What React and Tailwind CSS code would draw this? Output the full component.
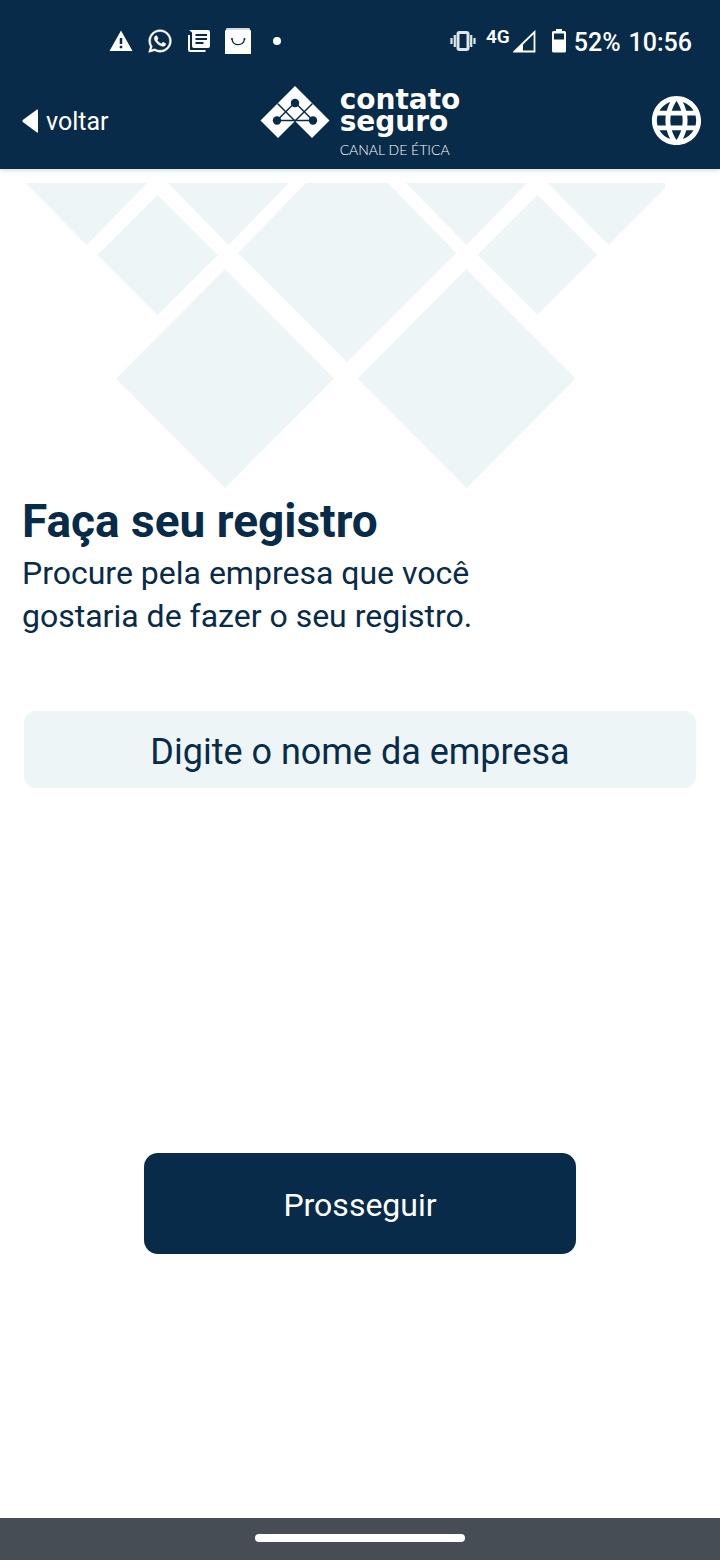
import React from "react";
import { FaWhatsapp } from "react-icons/fa";
import { MdLanguage } from "react-icons/md";

function StatusBar() {
  return (
    <div className="flex h-[82px] items-center justify-between pr-7 pl-[109px]">
      <div className="flex items-center gap-[14px]">
        <svg className="h-[22px] w-[24px]" viewBox="0 0 25 22" aria-hidden="true">
          <path d="M12.5 0 L24.5 21.5 H0.5 Z" fill="#fff" />
          <path d="M11.2 8h2.6v6h-2.6z M11.2 16h2.6v2.6h-2.6z" fill="#082b49" />
        </svg>
        <FaWhatsapp className="size-[26px] stroke-white stroke-[8px]" aria-hidden="true" />
        <svg className="h-[24px] w-[24px]" viewBox="0 0 24 24" aria-hidden="true">
          <path d="M4.5 1 H21 Q23 1 23 3 V17 Q23 19 21 19 H7 Q5 19 5 17 V4 Z" fill="#fff" />
          <path d="M2 1 H7 V5 Z" fill="#fff" />
          <path d="M1 6 H3 V21 H18.500 V23 H3 Q1 23 1 21 Z" fill="#fff" />
          <path d="M8.500 5h11.500v2h-11.500z M8.500 9h11.500v2h-11.500z M8.500 13h8v2h-8z" fill="#082b49" />
        </svg>
        <svg className="h-[26px] w-[26px]" viewBox="0 0 26 26" aria-hidden="true">
          <path d="M2 0 H24 L26 3 V26 H0 V3 Z" fill="#fff" />
          <path d="M2 0 H24 L25 2 H1 Z" fill="#d3d9de" />
          <path d="M7 11 C7.500 18.500 18.500 18.500 19.500 11" fill="none" stroke="#082b49" strokeWidth="1.300" />
          <circle cx="7" cy="11" r="1" fill="#082b49" />
          <circle cx="19.500" cy="11" r="1" fill="#082b49" />
        </svg>
        <span className="ml-2 size-2 rounded-full bg-white" />
      </div>
      <div className="flex items-center">
        <svg className="h-[20px] w-[26px]" viewBox="0 0 26 20" aria-hidden="true">
          <rect x="8" y="1.500" width="10" height="17" rx="1.500" fill="none" stroke="#dfe6ec" strokeWidth="3" />
          <path d="M4.800 4v12 M1.500 7v6 M21.200 4v12 M24.500 7v6" stroke="#dfe6ec" strokeWidth="2.200" />
        </svg>
        <span className="ml-[10px] pb-2 text-[19px] leading-5 font-semibold">4G</span>
        <svg className="ml-[3px] h-[23px] w-[23px]" viewBox="0 0 23 23" aria-hidden="true">
          <path d="M1.500 21.500 L21.500 2 V21.500 Z" fill="none" stroke="#fff" strokeWidth="1.800" />
          <path d="M1 22 L10 13 V22 Z" fill="#fff" />
        </svg>
        <svg className="ml-4 h-[24px] w-[14px]" viewBox="0 0 14 24" aria-hidden="true">
          <path d="M4 0 H10 V2 H12.500 Q14 2 14 3.500 V22 Q14 23.500 12.500 23.500 H1.500 Q0 23.500 0 22 V3.500 Q0 2 1.500 2 H4 Z" fill="#fff" />
          <rect x="2" y="4.500" width="10" height="6" fill="#082b49" />
        </svg>
        <div className="flex gap-2 pt-1 pl-2 text-[25px] leading-8 font-medium">
          <span>52%</span>
          <span>10:56</span>
        </div>
      </div>
    </div>
  );
}

function Logo() {
  return (
    <div className="flex items-start gap-[10px]">
      <svg className="h-[53px] w-[70px]" viewBox="0 0 70 53" aria-hidden="true">
        <path d="M35 0 L69.500 34.500 L52 52 L35 35 L18 52 L0.500 34.500 Z" fill="#fff" />
        <g stroke="#082b49" strokeWidth="1.500" fill="none">
          <path d="M17.500 17.500 L35 35 L52.500 17.500" />
          <path d="M17 34.500 L35 16.500 L53 34.500 Z" />
        </g>
        <g fill="#082b49">
          <circle cx="35" cy="17" r="4.200" />
          <circle cx="17" cy="34.500" r="4.200" />
          <circle cx="53" cy="34.500" r="4.200" />
        </g>
      </svg>
      <div className="flex flex-col pt-[3px]">
        <span className="font-['DejaVu_Sans',sans-serif] text-[28px] leading-[22px] font-bold">contato</span>
        <span className="font-['DejaVu_Sans',sans-serif] text-[28px] leading-[22px] font-bold">seguro</span>
        <span className="mt-[9px] font-['Lato',sans-serif] text-[14px] leading-4 font-light">CANAL DE ÉTICA</span>
      </div>
    </div>
  );
}

function Diamonds() {
  return (
    <svg className="mt-[14px] ml-[26px] h-[305px] w-[640px]" viewBox="26 183 640 305" fill="#edf5f6" aria-hidden="true">
      <path d="M26 183 H147 L86.500 245 Z" />
      <path d="M168 183 H289 L228.500 245 Z" />
      <path d="M406 183 H527 L466.500 245 Z" />
      <path d="M548 183 H665 V188 L608.500 245 Z" />
      <path d="M157.500 195 L217.500 255 L157.500 315 L97.500 255 Z" />
      <path d="M537.500 195 L597.500 255 L537.500 315 L477.500 255 Z" />
      <path d="M306 183 H388 L456 253 L347 362 L238 253 Z" />
      <path d="M225 269 L334 378.500 L225 488 L116 378.500 Z" />
      <path d="M466.500 269 L575.500 378.500 L466.500 488 L357.500 378.500 Z" />
    </svg>
  );
}

export default function App() {
  return (
    <div className="flex min-h-screen flex-col bg-white font-['Roboto',sans-serif] text-[#082b49]">
      <header className="bg-[#082b49] text-white shadow-[0_1px_5px_rgba(8,43,73,0.2)]">
        <StatusBar />
        <div className="grid h-[87px] grid-cols-[1fr_auto_1fr] items-start px-[14px]">
          <button type="button" className="mt-[22px] ml-2 flex items-center gap-2 justify-self-start text-[25px] leading-8">
            <svg className="h-[24px] w-[16px]" viewBox="0 0 16 24" aria-hidden="true">
              <path d="M15 0.500 Q16 0 16 1.500 V22.500 Q16 24 15 23.500 L0.800 13 Q0 12 0.800 11 Z" fill="#fff" />
            </svg>
            <span className="pt-0.5">voltar</span>
          </button>
          <div className="mt-1">
            <Logo />
          </div>
          <button type="button" aria-label="Idioma" className="mt-[9px] justify-self-end">
            <MdLanguage className="size-[59px]" />
          </button>
        </div>
      </header>

      <main className="flex flex-1 flex-col">
        <Diamonds />
        <div className="px-[22px] pt-[7px]">
          <h1 className="text-[46px] leading-[52px] font-bold">Faça seu registro</h1>
          <p className="mt-[5px] text-[32px] leading-[43px]">
            Procure pela empresa que você
            <br />
            gostaria de fazer o seu registro.
          </p>
        </div>
        <div className="mt-[73px] px-6">
          <input
            type="text"
            aria-label="Nome da empresa"
            placeholder="Digite o nome da empresa"
            className="h-[77px] w-full rounded-xl bg-[#edf5f6] px-4 pt-1 text-center text-[36px] outline-none placeholder:text-[#082b49] placeholder:opacity-100"
          />
        </div>
        <button
          type="button"
          className="mt-[365px] h-[101px] w-3/5 self-center rounded-[14px] bg-[#082b49] pt-0.5 text-[32px] text-white"
        >
          Prosseguir
        </button>
      </main>

      <footer className="flex h-[42px] items-center justify-center bg-[#464d54] pb-0.5">
        <span className="h-2 w-[210px] rounded-full bg-white" />
      </footer>
    </div>
  );
}
